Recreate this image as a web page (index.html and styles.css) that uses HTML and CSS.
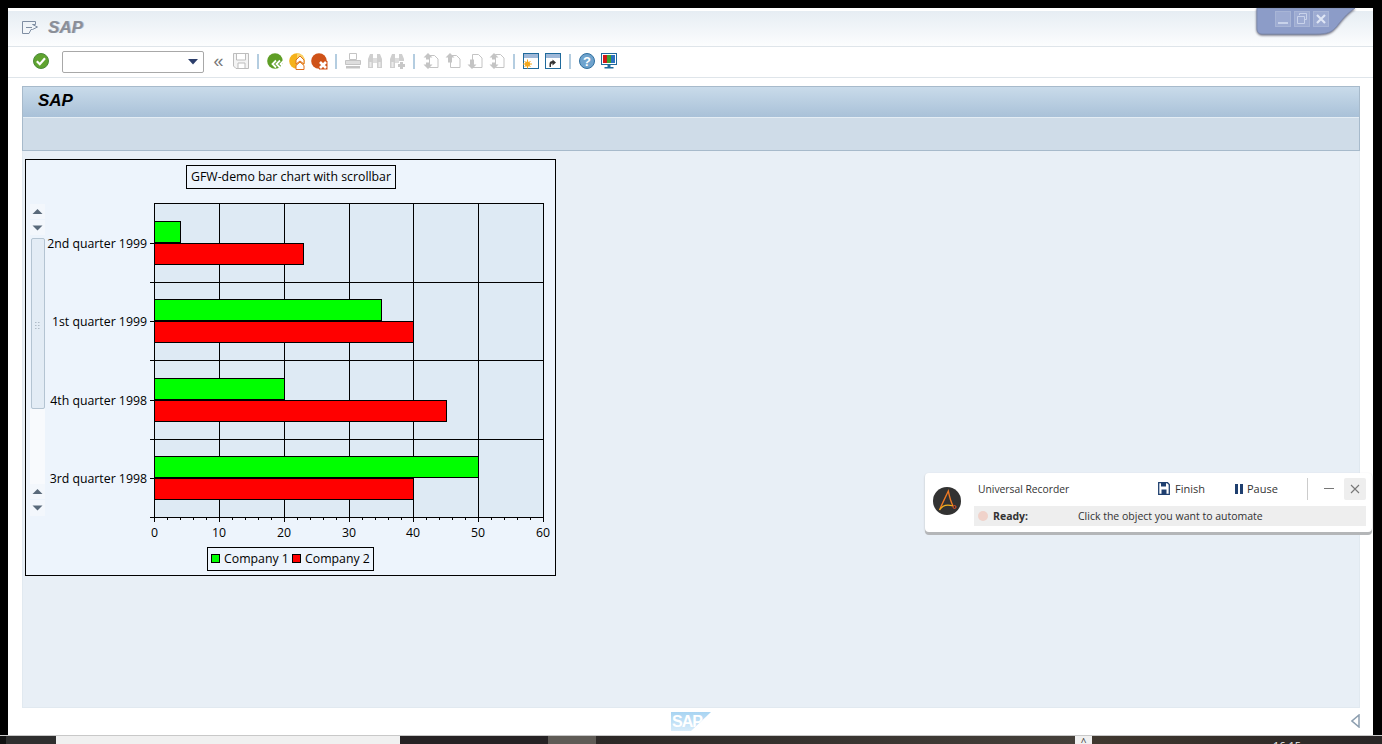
FILE: index.html
```html
<!DOCTYPE html>
<html lang="en">
<head>
<meta charset="utf-8">
<title>SAP</title>
<link rel="stylesheet" href="styles.css">
</head>
<body>
<div class="window">
  <header class="titlebar">
    <svg class="menu-icon" width="16" height="13" viewBox="0 0 16 13"><path d="M.5.500h13v3h-3l5 2.500-5 2.500H9L7 12.500H.5z" fill="none" stroke="#7f8ea3"/><path d="M4 6.500h6" stroke="#7f8ea3"/></svg>
    <span class="title">SAP</span>
    <div class="win-tab">
      <svg class="win-shape" width="104" height="30" viewBox="0 0 104 30"><path d="M1 0H99C90 6 85 13 81 18C76 24 72 26 60 26H6C3 26 1 24 1 21Z" fill="#8c9cc8" stroke="#7d8bb0"/></svg>
      <div class="win-buttons">
        <span class="win-btn"><svg width="16" height="16" viewBox="0 0 16 16"><rect x="3" y="11" width="10" height="2" fill="#c8d2ea"/></svg></span>
        <span class="win-btn"><svg width="16" height="16" viewBox="0 0 16 16"><path d="M5.500 4V2.500h7v6H11M3.500 5.500h7v7h-7z" fill="none" stroke="#c8d2ea"/></svg></span>
        <span class="win-btn"><svg width="16" height="16" viewBox="0 0 16 16"><path d="M4 4l8 8M12 4l-8 8" stroke="#dfe6f5" stroke-width="2.200"/></svg></span>
      </div>
    </div>
  </header>

  <nav class="toolbar">
    <svg class="ic ic-check" width="16" height="16" viewBox="0 0 16 16"><circle cx="8" cy="8" r="7.500" fill="#5fa32f" stroke="#4a8a3a"/><path d="M3.800 8.200l3 3 5.200-6" fill="none" stroke="#fff" stroke-width="2.200"/></svg>
    <div class="combo"><svg width="10" height="6" viewBox="0 0 10 6"><path d="M0 0h10L5 5.500z" fill="#2c3e6b"/></svg></div>
    <span class="chevrons">«</span>
    <svg class="ic" width="16" height="16" viewBox="0 0 16 16"><path d="M.5.500h15v15H3L.5 13z" fill="#f4f4f4" stroke="#bdbdbd"/><path d="M3.500 1v6h9V1M5 15v-5h7v5" fill="#fff" stroke="#bdbdbd"/></svg>
    <i class="sep"></i>
    <svg class="ic ic-over" width="17" height="17" viewBox="0 0 17 17"><circle cx="8" cy="8" r="7.800" fill="#5f9e26"/><path d="M9 7.500L5.500 11 9 14.500M13 7.500L9.500 11l3.500 3.500M17 7.500L13.500 11l3.500 3.500" fill="none" stroke="#fff" stroke-width="1.800"/></svg>
    <svg class="ic ic-over ic-gap" width="17" height="17" viewBox="0 0 17 17"><circle cx="8" cy="8" r="7.800" fill="#f5b21b"/><path d="M8 .2A7.800 7.800 0 0 1 8 15.800z" fill="#f9d36a"/><path d="M7 7l4-4 4 4v4l-4-3-4 3zM7 12.500l4-3.500 4 3.500V16.500H7z" fill="#fff" stroke="#e0701c"/></svg>
    <svg class="ic ic-over ic-gap" width="17" height="17" viewBox="0 0 17 17"><circle cx="8" cy="8" r="7.800" fill="#cf5218"/><path d="M8 8h8.500v8.500H8z" fill="#cf5218"/><path d="M9 9l6 6M15 9l-6 6" stroke="#fff" stroke-width="2.600"/></svg>
    <i class="sep"></i>
    <svg class="ic" width="16" height="16" viewBox="0 0 16 16"><path d="M4.500.5h7v6h-7z" fill="#fff" stroke="#c4c4c4"/><path d="M.5 7.500h15v4H.5z" fill="#dedede" stroke="#c4c4c4"/><path d="M1 13h14v2.500H1z" fill="#c4c4c4"/></svg>
    <svg class="ic ic-gap" width="16" height="16" viewBox="0 0 16 16"><path d="M3 1h3v14H1V6zM10 1h3l2 5v9h-5z" fill="#cfcfcf"/><path d="M6 5h4v5H6z" fill="#dedede"/><path d="M2.500 9h2v5h-2zM11.500 9h2v5h-2z" fill="#ececec"/></svg>
    <svg class="ic ic-gap" width="16" height="16" viewBox="0 0 16 16"><path d="M3 1h3v14H1V6zM10 1h3l2 5v2h-5z" fill="#cfcfcf"/><path d="M6 5h4v5H6z" fill="#dedede"/><path d="M2.500 9h2v5h-2z" fill="#ececec"/><path d="M9 11h2V9h3v2h2v3h-2v2h-3v-2H9z" fill="#c8c8c8"/></svg>
    <i class="sep"></i>
    <svg class="ic" width="16" height="16" viewBox="0 0 16 16"><path d="M6.500 2.500h5l3.500 3.500v8.500H6.500z" fill="#fff" stroke="#c4c4c4"/><path d="M5 0l4.500 4.500H7v2H3v-2H.5zM5 16l4.500-4.500H7v-2H3v2H.5z" fill="#c4c4c4"/></svg>
    <svg class="ic ic-gap" width="16" height="16" viewBox="0 0 16 16"><path d="M5.500 2.500h6l3.500 3.500v8.500H5.500z" fill="#fff" stroke="#c4c4c4"/><path d="M5 0l4.500 4.500H7v5H3v-5H.5z" fill="#c4c4c4"/></svg>
    <svg class="ic ic-gap" width="16" height="16" viewBox="0 0 16 16"><path d="M5.500 1.500h6l3.500 3.500v9.500H5.500z" fill="#fff" stroke="#c4c4c4"/><path d="M5 16l4.500-4.500H7v-5H3v5H.5z" fill="#c4c4c4"/></svg>
    <svg class="ic ic-gap" width="16" height="16" viewBox="0 0 16 16"><path d="M6.500 1.500h5l3.500 3.500v9.500H6.500z" fill="#fff" stroke="#c4c4c4"/><path d="M5 0l4.500 4.500H7v2H3v-2H.5zM5 16l4.500-4.500H7v-2H3v2H.5z" fill="#c4c4c4"/></svg>
    <i class="sep"></i>
    <svg class="ic" width="16" height="16" viewBox="0 0 16 16"><rect x=".5" y=".5" width="15" height="15" fill="#fff" stroke="#1f6a9c"/><rect x="1" y="1" width="14" height="4" fill="#9fb8d8"/><circle cx="4.500" cy="11" r="2.600" fill="#f5a81c"/><path d="M4.500 6.500v9M0 11h9M1.500 8l6 6M7.500 8l-6 6" stroke="#f5a81c"/></svg>
    <svg class="ic ic-gap" width="16" height="16" viewBox="0 0 16 16"><rect x=".5" y=".5" width="15" height="15" fill="#fff" stroke="#1f6a9c"/><rect x="1" y="1" width="14" height="4" fill="#9fb8d8"/><path d="M4.500 14v-3c0-2 1-3 3-3V6.500L11 9.500 7.500 12.500V10.500c-1 0-1.500.5-1.500 1.500v2z" fill="#333"/></svg>
    <i class="sep"></i>
    <svg class="ic" width="16" height="16" viewBox="0 0 16 16"><circle cx="8" cy="8" r="7.500" fill="#6fa3cd" stroke="#2f6f9f"/><text class="help-mark" x="8" y="12.500" text-anchor="middle">?</text></svg>
    <svg class="ic ic-gap" width="16" height="16" viewBox="0 0 16 16"><rect x=".5" y=".5" width="15" height="11" fill="#fff" stroke="#1f6a9c"/><rect x="2" y="2" width="4" height="8" fill="#d01818"/><rect x="6" y="2" width="4" height="8" fill="#3fa02f"/><rect x="10" y="2" width="4" height="8" fill="#2a70c0"/><path d="M6.500 12h3v2h-3zM3.500 14h9v1.500h-9z" fill="#1f6a9c"/></svg>
  </nav>

  <main class="content">
    <section class="screen-head">
      <div class="screen-title">SAP</div>
      <div class="screen-tools"></div>
    </section>
    <section class="screen-body">
      <svg class="chart" width="531" height="417" viewBox="25 159 531 417">
        <rect class="chart-bg" x="25.500" y="159.500" width="530" height="416"/>
        <rect class="box" x="186.500" y="165.500" width="209" height="23"/>
        <text class="lbl" x="291" y="181" text-anchor="middle">GFW-demo bar chart with scrollbar</text>

        <rect class="plot" x="154.500" y="203.500" width="389" height="314"/>
        <path class="line" d="M219.500 203V517M284.500 203V517M349.500 203V517M413.500 203V517M478.500 203V517M150 282.500H544M150 360.500H544M150 439.500H544M150 517.500H544M150 243.500H155M150 321.500H155M150 400.500H155M150 478.500H155"/>

        <rect class="g" x="154.500" y="221.500" width="26" height="21"/>
        <rect class="r" x="154.500" y="243.500" width="149" height="21"/>
        <rect class="g" x="154.500" y="299.500" width="227" height="21"/>
        <rect class="r" x="154.500" y="321.500" width="259" height="21"/>
        <rect class="g" x="154.500" y="378.500" width="130" height="21"/>
        <rect class="r" x="154.500" y="400.500" width="292" height="21"/>
        <rect class="g" x="154.500" y="456.500" width="324" height="21"/>
        <rect class="r" x="154.500" y="478.500" width="259" height="21"/>

        <path class="line" d="M154.500 517V522M219.500 517V522M284.500 517V522M349.500 517V522M413.500 517V522M478.500 517V522M543.500 517V522M167.500 517V520M180.500 517V520M193.500 517V520M206.500 517V520M232.500 517V520M245.500 517V520M258.500 517V520M271.500 517V520M297.500 517V520M310.500 517V520M323.500 517V520M336.500 517V520M362.500 517V520M375.500 517V520M388.500 517V520M401.500 517V520M426.500 517V520M439.500 517V520M452.500 517V520M465.500 517V520M491.500 517V520M504.500 517V520M517.500 517V520M530.500 517V520"/>

        <text class="lbl" x="147" y="248" text-anchor="end">2nd quarter 1999</text>
        <text class="lbl" x="147" y="326" text-anchor="end">1st quarter 1999</text>
        <text class="lbl" x="147" y="405" text-anchor="end">4th quarter 1998</text>
        <text class="lbl" x="147" y="483" text-anchor="end">3rd quarter 1998</text>

        <text class="lbl" x="154.500" y="537" text-anchor="middle">0</text>
        <text class="lbl" x="219" y="537" text-anchor="middle">10</text>
        <text class="lbl" x="284" y="537" text-anchor="middle">20</text>
        <text class="lbl" x="349" y="537" text-anchor="middle">30</text>
        <text class="lbl" x="413" y="537" text-anchor="middle">40</text>
        <text class="lbl" x="478" y="537" text-anchor="middle">50</text>
        <text class="lbl" x="543" y="537" text-anchor="middle">60</text>

        <rect class="box" x="207.500" y="547.500" width="166" height="23"/>
        <rect class="g" x="211.500" y="554.500" width="8" height="8"/>
        <text class="lbl" x="224" y="563">Company 1</text>
        <rect class="r" x="292.500" y="554.500" width="8" height="8"/>
        <text class="lbl" x="305" y="563">Company 2</text>

        <rect class="sb-btn" x="30" y="204" width="15" height="15"/>
        <path class="sb-arrow" d="M32.500 214L37.500 209L42.500 214Z"/>
        <rect class="sb-btn" x="30" y="220" width="15" height="15"/>
        <path class="sb-arrow" d="M32.500 225.500L37.500 230.500L42.500 225.500Z"/>
        <rect class="sb-track" x="30" y="409" width="15" height="75"/>
        <rect class="sb-thumb" x="31.500" y="238.500" width="13" height="170" rx="1.500"/>
        <path class="sb-grip" d="M35 322h1.500v1H35zM38 322h1.500v1H38zM35 325h1.500v1H35zM38 325h1.500v1H38zM35 328h1.500v1H35zM38 328h1.500v1H38z"/>
        <rect class="sb-btn" x="30" y="484" width="15" height="15"/>
        <path class="sb-arrow" d="M32.500 494L37.500 489L42.500 494Z"/>
        <rect class="sb-btn" x="30" y="500" width="15" height="16"/>
        <path class="sb-arrow" d="M32.500 505.500L37.500 510.500L42.500 505.500Z"/>
      </svg>
    </section>
  </main>

  <footer class="statusbar">
    <div class="sap-logo"><span>SAP</span></div>
    <svg class="collapse" width="9" height="14" viewBox="0 0 9 14"><path d="M8 1v12L1 7z" fill="#fff" stroke="#8d9fb0" stroke-width="1.500"/></svg>
  </footer>
</div>

<aside class="recorder">
  <svg class="rec-logo" width="28" height="28" viewBox="0 0 28 28"><circle cx="14" cy="14" r="14" fill="#323232"/><path d="M6.500 23C10 15 13 9 15.300 4C16.500 10 18 15 20 19" fill="none" stroke="#f07a24" stroke-width="1.300"/><path d="M6.500 23C9 19 14 17 20 19" fill="none" stroke="#f2b21e" stroke-width="1.300"/><circle cx="21.500" cy="20" r="1.500" fill="none" stroke="#e2502a"/></svg>
  <div class="rec-main">
    <div class="rec-top">
      <span class="rec-name">Universal Recorder</span>
      <span class="rec-action rec-finish"><svg width="12" height="13" viewBox="0 0 12 13"><path d="M.7.700h8.800l1.800 1.800v9.800H.7z" fill="none" stroke="#1f3f6f" stroke-width="1.300"/><path d="M3 1h5v3.500H3zM3.500 7.500h5V12h-5z" fill="#1f3f6f"/></svg>Finish</span>
      <span class="rec-action rec-pause"><i class="pause-bars"></i>Pause</span>
      <i class="rec-sep"></i>
      <span class="rec-min"></span>
      <span class="rec-close"><svg width="10" height="10" viewBox="0 0 10 10"><path d="M1 1l8 8M9 1L1 9" stroke="#777" stroke-width="1.100"/></svg></span>
    </div>
    <div class="rec-status">
      <i class="rec-dot"></i>
      <b class="rec-ready">Ready:</b>
      <span>Click the object you want to automate</span>
    </div>
  </div>
</aside>

<div class="taskbar">
  <span class="tb-a"></span>
  <span class="tb-search"></span>
  <span class="tb-b"></span>
  <span class="tb-active"></span>
  <span class="tb-c"></span>
  <span class="tb-tray">^</span>
  <span class="tb-d"><span class="tb-clock">16:15</span></span>
</div>
</body>
</html>
```
FILE: styles.css
```css
* { box-sizing: border-box; }
html, body { margin: 0; height: 744px; overflow: hidden; }
body {
  position: relative;
  background: #000;
  font-family: "Open Sans", "Noto Sans", sans-serif;
  display: flex;
  flex-direction: column;
  padding-top: 8px;
}
.window {
  width: 1365px;
  height: 727px;
  margin-left: 8px;
  background: #fff;
  display: flex;
  flex-direction: column;
}
.titlebar {
  position: relative;
  height: 39px;
  flex: none;
  display: flex;
  align-items: center;
  padding: 0 0 0 14px;
  background: linear-gradient(#fff 0, #fff 3px, #e6edf3 3px, #fcfdfe 100%);
  border-bottom: 1px solid #dfe5ea;
}
.menu-icon { margin-top: 1px; }
.title {
  margin: 2px 0 0 10px;
  font: italic bold 17px "Liberation Sans", Arial, sans-serif;
  color: #8b8f98;
  text-shadow: 1px 0 0 #b8c2d0;
}
.win-tab { position: absolute; left: 1248px; top: 0; width: 104px; height: 30px; }
.win-shape { display: block; filter: drop-shadow(0 1px 1px #667); }
.win-buttons { position: absolute; left: 19px; top: 3px; display: flex; gap: 3px; }
.win-btn { width: 16px; height: 16px; background: #9dabd2; outline: 1px solid #a8b5d6; outline-offset: -1px; display: block; }
.win-btn svg { display: block; }

.toolbar {
  height: 31px;
  flex: none;
  display: flex;
  align-items: center;
  padding-left: 25px;
  background: #fff;
  border-bottom: 1px solid #dfe5ea;
}
.ic { flex: none; display: block; margin-bottom: 2px; }
.ic-over { margin-right: -1px; }
.ic-gap { margin-left: 6px; }
.combo {
  width: 142px;
  height: 22px;
  margin-left: 13px;
  background: #fff;
  border: 1px solid #a8a8a8;
  border-radius: 2px;
  display: flex;
  align-items: center;
  justify-content: flex-end;
  padding-right: 5px;
}
.chevrons {
  width: 29px;
  margin-bottom: 3px;
  text-align: center;
  font: 18px/22px "Liberation Sans", Arial, sans-serif;
  color: #777;
}
.sep {
  flex: none;
  width: 2px;
  height: 15px;
  margin: 0 8px 2px;
  background: #b4cde0;
}
.help-mark { font: bold 13px "Liberation Sans", Arial, sans-serif; fill: #fff; }

.content {
  flex: 1;
  min-height: 0;
  display: flex;
  flex-direction: column;
  padding: 8px 13px 0 14px;
  background: #fff;
}
.screen-head { flex: none; border: 1px solid #a7bacb; }
.screen-title {
  height: 30px;
  padding-left: 15px;
  font: italic bold 17px/28px "Liberation Sans", Arial, sans-serif;
  color: #000;
  background: linear-gradient(#c9dbea, #a9c1d8);
}
.screen-tools { height: 33px; background: #cfdce8; border-top: 1px solid #e4edf4; }
.screen-body {
  flex: 1;
  min-height: 0;
  padding: 8px 0 0 2px;
  background: #e8eff6;
  border: 1px solid #e1e9f0;
  border-top: 0;
}
.chart { display: block; }
.chart-bg { fill: #edf4fc; stroke: #000; }
.box { fill: none; stroke: #000; }
.plot { fill: #deeaf4; stroke: #000; }
.line { fill: none; stroke: #000; stroke-width: 1; }
.g { fill: #00ff00; stroke: #000; }
.r { fill: #ff0000; stroke: #000; }
.lbl { font: 12.300px "Open Sans", "Noto Sans", sans-serif; fill: #000; }
.sb-btn { fill: #f3f7fc; }
.sb-arrow { fill: #5a6a7a; }
.sb-track { fill: #f8fafd; }
.sb-thumb { fill: #e3ecf5; stroke: #b4c4d2; }
.sb-grip { fill: #b0bcc8; }

.statusbar {
  height: 27px;
  flex: none;
  position: relative;
  display: flex;
  align-items: flex-start;
  background: #fff;
}
.sap-logo {
  width: 40px;
  height: 19px;
  margin: 4px 0 0 663px;
  background: linear-gradient(#a8d4f2, #d8ecfa);
  clip-path: polygon(0 0, 100% 0, 50% 100%, 0 100%);
}
.sap-logo span {
  display: block;
  padding: 2px 0 0 1px;
  font: bold 16px/15px "Liberation Sans", Arial, sans-serif;
  letter-spacing: -1px;
  color: #fff;
}
.collapse { margin: 6px 0 0 640px; }

.recorder {
  position: absolute;
  left: 925px;
  top: 473px;
  width: 447px;
  height: 59px;
  padding: 0 6px 0 8px;
  display: flex;
  background: #fff;
  border-radius: 4px;
  box-shadow: 0 3px 0 #b4b6b8, 0 1px 2px #b4b6b8;
  color: #333;
  font-size: 10.300px;
}
.rec-logo { flex: none; margin-top: 14px; }
.rec-main { flex: 1; margin-left: 13px; }
.rec-top { height: 33px; display: flex; align-items: center; padding-bottom: 2px; }
.rec-name { width: 184px; padding-left: 4px; }
.rec-action { display: flex; align-items: center; gap: 5px; font-size: 11px; }
.rec-finish svg { flex: none; }
.rec-pause { margin-left: 30px; gap: 4px; }
.pause-bars { width: 8px; height: 10px; border-left: 3px solid #1f3f6f; border-right: 3px solid #1f3f6f; }
.rec-sep { width: 1px; height: 22px; margin-left: 29px; background: #ccc; }
.rec-min { width: 10px; height: 1px; margin-left: 16px; background: #777; }
.rec-close { width: 22px; height: 22px; margin-left: 10px; background: #eee; border-radius: 2px; display: flex; align-items: center; justify-content: center; }
.rec-status { height: 20px; display: flex; align-items: center; background: #eee; padding-left: 4px; font-size: 10.500px; }
.rec-dot { width: 10px; height: 10px; border-radius: 50%; background: #f0d2ca; }
.rec-ready { width: 85px; margin-left: 5px; }

.taskbar {
  flex: none;
  height: 9px;
  display: flex;
  border-top: 1px solid #c8c8c8;
  background: #2a2626;
  overflow: hidden;
}
.tb-a { width: 56px; background: linear-gradient(90deg, #111 0, #111 6px, #2f2f2f 6px); }
.tb-search { width: 344px; background: #f0f0f0; }
.tb-b { width: 148px; background: #262224; }
.tb-active { width: 48px; background: #5f5b56; }
.tb-c { width: 479px; background: linear-gradient(90deg, #2c2826, #45403a); }
.tb-tray { width: 17px; background: #f0f0f0; color: #333; font: 10px/12px "Open Sans", sans-serif; text-align: center; }
.tb-d { width: 277px; background: linear-gradient(90deg, #40382f 0, #2a2626 100%); color: #eee; font: 11px/14px "Open Sans", sans-serif; padding: 3px 0 0 181px; }
.tb-clock { display: block; }
```
